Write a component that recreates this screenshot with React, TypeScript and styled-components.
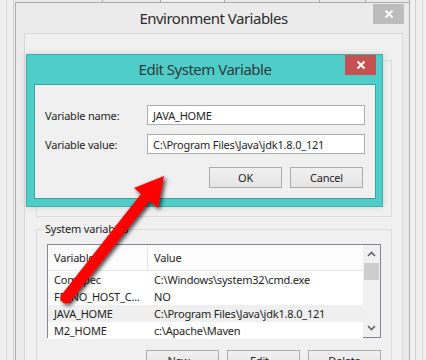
import React from 'react';
import styled, { createGlobalStyle } from 'styled-components';

const GlobalStyle = createGlobalStyle`
  html, body {
    margin: 0;
    padding: 0;
    background: #f0f0f0;
    overflow: hidden;
  }
  * { box-sizing: border-box; }
`;

const font = `"Noto Sans", "Open Sans", sans-serif`;

// small text of the dialogs (stands in for Segoe UI 9pt)
const small = `
  font-size: 11px;
  letter-spacing: -0.2px;
`;

const Desktop = styled.div`
  position: relative;
  width: 426px;
  height: 360px;
  overflow: hidden;
  background: #f0f0f0;
  font-family: ${font};
  color: #1e1e1e;
`;

// the System Properties window that lies behind everything
const BackWindow = styled.div`
  position: absolute;
  left: 6px;
  top: -40px;
  width: 417px;
  height: 420px;
  border-left: 1px solid #d6d6d6;
  border-right: 1px solid #d6d6d6;
  background: #f0f0f0;
`;

const BackInner = styled.div`
  position: absolute;
  left: 6px;
  right: 6px;
  top: 0;
  bottom: 0;
  border-left: 1px solid #d0d0d0;
  border-right: 1px solid #d0d0d0;
`;

const TabStrip = styled.div`
  position: absolute;
  left: 15px;
  top: 0;
  width: 395px;
  height: 3px;
  display: flex;
`;

const Tab = styled.div<{ $w: number; $open?: boolean }>`
  width: ${(p) => p.$w}px;
  height: 3px;
  border-right: 1px solid #a8a8a8;
  border-bottom: ${(p) => (p.$open ? 'none' : '1px solid #a8a8a8')};
  background: ${(p) => (p.$open ? '#f0f0f0' : '#e8e8e8')};
`;

const Window = styled.div`
  position: absolute;
  left: 15px;
  top: 2px;
  width: 395px;
  height: 400px;
  border: 1px solid #adadad;
  background: #ebebeb;
  display: flex;
  flex-direction: column;
  padding: 0 6px 0 8px;
`;

const TitleBar = styled.div`
  position: relative;
  flex-shrink: 0;
  height: 30px;
  display: flex;
  align-items: center;
  justify-content: center;
  font-size: 15px;
  letter-spacing: -0.5px;
  color: #2b2b2b;
  padding-bottom: 1px;
`;

const CloseBtn = styled.div<{ $active?: boolean }>`
  position: absolute;
  right: ${(p) => (p.$active ? '0' : '-1px')};
  top: ${(p) => (p.$active ? '0' : '1px')};
  width: 31px;
  height: 20px;
  background: ${(p) => (p.$active ? '#c75050' : '#bcbcbc')};
  display: flex;
  align-items: center;
  justify-content: center;
`;

const Client = styled.div`
  flex: 1;
  background: #f0f0f0;
  border: 1px solid #d9d9d9;
  border-bottom: none;
  padding: 26px 10px 0 11px;
  display: flex;
  flex-direction: column;
  gap: 12px;
`;

const GroupBox = styled.div<{ $h: number }>`
  position: relative;
  flex-shrink: 0;
  height: ${(p) => p.$h}px;
  border: 1px solid #dcdcdc;
  padding: 14px 10px 0 10px;
  ${small}
`;

const GroupLabel = styled.span`
  position: absolute;
  left: 6px;
  top: -9px;
  padding: 0 2px;
  background: #f0f0f0;
  line-height: 16px;
`;

const ListBox = styled.div`
  height: 94px;
  border: 1px solid #828790;
  background: #fff;
  display: flex;
  position: relative;
`;

const ListRows = styled.div`
  flex: 1;
  display: flex;
  flex-direction: column;
`;

const HeaderRow = styled.div`
  height: 26px;
  flex-shrink: 0;
  display: flex;
  align-items: center;
  border-bottom: 1px solid #e5e5e5;
  background: #fcfcfc;
`;

const Row = styled.div<{ $sel?: boolean }>`
  height: 17px;
  flex-shrink: 0;
  display: flex;
  align-items: center;
  background: ${(p) => (p.$sel ? '#efefef' : '#fff')};
`;

const Cell = styled.div<{ $w?: number; $div?: boolean }>`
  width: ${(p) => (p.$w ? `${p.$w}px` : 'auto')};
  flex: ${(p) => (p.$w ? 'none' : '1')};
  padding-left: 6px;
  height: 100%;
  display: flex;
  align-items: center;
  white-space: nowrap;
  overflow: hidden;
  border-right: ${(p) => (p.$div ? '1px solid #e5e5e5' : 'none')};
`;

const ScrollBar = styled.div`
  width: 17px;
  display: flex;
  flex-direction: column;
  align-items: center;
  background: #f0f0f0;
  padding: 0 1px;
`;

const ScrollArrow = styled.div`
  height: 18px;
  display: flex;
  align-items: center;
  justify-content: center;
`;

const Thumb = styled.div`
  width: 15px;
  height: 17px;
  background: #cdcdcd;
`;

const ScrollTrack = styled.div`
  flex: 1;
`;

const ButtonRow = styled.div`
  display: flex;
  justify-content: flex-end;
  gap: 8px;
  padding-top: 12px;
`;

const Button = styled.div`
  width: 73px;
  height: 21px;
  border: 1px solid #acacac;
  background: linear-gradient(#f0f0f0, #e5e5e5);
  display: flex;
  align-items: center;
  justify-content: center;
  ${small}
`;

const Dialog = styled.div`
  position: absolute;
  left: 26px;
  top: 54px;
  width: 357px;
  height: 153px;
  background: #4fcdc9;
  border: 1px solid #3bb0ac;
  display: flex;
  flex-direction: column;
  padding: 0 6px 7px 7px;
  box-shadow: 0 0 6px rgba(0, 0, 0, 0.12);
`;

const DialogTitle = styled(TitleBar)`
  height: 29px;
  color: #2d3a3a;
`;

const DialogClient = styled.div`
  flex: 1;
  background: #f0f0f0;
  border: 1px solid #3aa39f;
  padding: 20px 10px 0 10px;
  display: flex;
  flex-direction: column;
  gap: 9px;
  ${small}
`;

const FieldRow = styled.div`
  display: flex;
  align-items: center;
`;

const FieldLabel = styled.label`
  width: 102px;
`;

const Input = styled.div`
  width: 218px;
  height: 20px;
  border: 1px solid #abadb3;
  background: #fff;
  display: flex;
  align-items: center;
  padding-left: 5px;
  white-space: nowrap;
`;

const DialogButtons = styled.div`
  display: flex;
  justify-content: flex-end;
  gap: 8px;
  padding: 4px 2px 0 0;
`;

const Overlay = styled.svg`
  position: absolute;
  left: 0;
  top: 0;
  pointer-events: none;
`;

const Cross = ({ color }: { color: string }) => (
  <svg width="10" height="10" viewBox="0 0 10 10">
    <path d="M1.5 1.5 L8.5 8.5 M8.5 1.5 L1.5 8.5" stroke={color} strokeWidth="2" />
  </svg>
);

const Chevron = ({ up }: { up?: boolean }) => (
  <svg width="9" height="6" viewBox="0 0 9 6">
    <path d={up ? 'M1 5 L4.5 1.5 L8 5' : 'M1 1 L4.5 4.5 L8 1'} stroke="#606060" strokeWidth="1.6" fill="none" />
  </svg>
);

const rows = [
  { name: 'ComSpec', value: 'C:\\Windows\\system32\\cmd.exe' },
  { name: 'FP_NO_HOST_C...', value: 'NO' },
  { name: 'JAVA_HOME', value: 'C:\\Program Files\\Java\\jdk1.8.0_121', sel: true },
  { name: 'M2_HOME', value: 'c:\\Apache\\Maven' },
];

export default function App() {
  return (
    <Desktop>
      <GlobalStyle />
      <BackWindow>
        <BackInner />
      </BackWindow>
      <TabStrip>
        <Tab $w={88} />
        <Tab $w={58} />
        <Tab $w={64} $open />
        <Tab $w={95} />
        <Tab $w={46} />
        <Tab $w={44} />
      </TabStrip>

      <Window>
        <TitleBar>
          Environment Variables
          <CloseBtn>
            <Cross color="#fff" />
          </CloseBtn>
        </TitleBar>
        <Client>
          <GroupBox $h={157} />
          <GroupBox $h={200}>
            <GroupLabel>System variables</GroupLabel>
            <ListBox>
              <ListRows>
                <HeaderRow>
                  <Cell $w={100} $div>Variable</Cell>
                  <Cell>Value</Cell>
                </HeaderRow>
                {rows.map((r) => (
                  <Row key={r.name} $sel={r.sel}>
                    <Cell $w={100}>{r.name}</Cell>
                    <Cell>{r.value}</Cell>
                  </Row>
                ))}
              </ListRows>
              <ScrollBar>
                <ScrollArrow>
                  <Chevron up />
                </ScrollArrow>
                <Thumb />
                <ScrollTrack />
                <ScrollArrow>
                  <Chevron />
                </ScrollArrow>
              </ScrollBar>
            </ListBox>
            <ButtonRow>
              <Button>New...</Button>
              <Button>Edit...</Button>
              <Button>Delete</Button>
            </ButtonRow>
          </GroupBox>
        </Client>
      </Window>

      <Dialog>
        <DialogTitle>
          Edit System Variable
          <CloseBtn $active>
            <Cross color="#fff" />
          </CloseBtn>
        </DialogTitle>
        <DialogClient>
          <FieldRow>
            <FieldLabel>Variable name:</FieldLabel>
            <Input>JAVA_HOME</Input>
          </FieldRow>
          <FieldRow>
            <FieldLabel>Variable value:</FieldLabel>
            <Input>C:\Program Files\Java\jdk1.8.0_121</Input>
          </FieldRow>
          <DialogButtons>
            <Button>OK</Button>
            <Button>Cancel</Button>
          </DialogButtons>
        </DialogClient>
      </Dialog>

      <Overlay width="426" height="360" viewBox="0 0 426 360">
        <defs>
          <filter id="sh" x="-20%" y="-20%" width="140%" height="140%">
            <feDropShadow dx="2" dy="2" stdDeviation="2" floodColor="#000" floodOpacity="0.75" />
          </filter>
        </defs>
        <g filter="url(#sh)">
          <line x1="66" y1="298" x2="148" y2="194" stroke="#ff0000" strokeWidth="11" strokeLinecap="round" />
          <polygon points="164,176 158,208 134,188" fill="#ff0000" />
        </g>
      </Overlay>
    </Desktop>
  );
}
